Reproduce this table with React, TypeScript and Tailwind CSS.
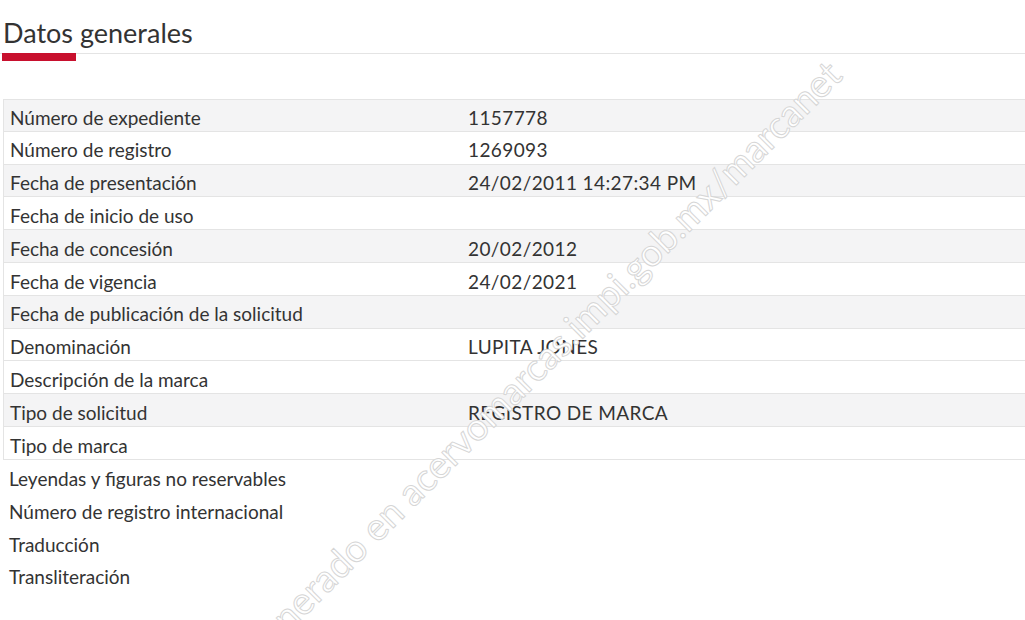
import React from 'react'

type Row = { label: string; value?: string; shade?: boolean; boxed?: boolean }

const rows: Row[] = [
  { label: 'Número de expediente', value: '1157778', shade: true, boxed: true },
  { label: 'Número de registro', value: '1269093', boxed: true },
  { label: 'Fecha de presentación', value: '24/02/2011 14:27:34 PM', shade: true, boxed: true },
  { label: 'Fecha de inicio de uso', boxed: true },
  { label: 'Fecha de concesión', value: '20/02/2012', shade: true, boxed: true },
  { label: 'Fecha de vigencia', value: '24/02/2021', boxed: true },
  { label: 'Fecha de publicación de la solicitud', shade: true, boxed: true },
  { label: 'Denominación', value: 'LUPITA JONES', boxed: true },
  { label: 'Descripción de la marca', boxed: true },
  { label: 'Tipo de solicitud', value: 'REGISTRO DE MARCA', shade: true, boxed: true },
  { label: 'Tipo de marca', boxed: true },
  { label: 'Leyendas y figuras no reservables' },
  { label: 'Número de registro internacional' },
  { label: 'Traducción' },
  { label: 'Transliteración' },
]

const App = () => {
  return (
    <div className="relative w-full h-[620px] overflow-hidden bg-white text-[#333333] font-['Lato','Liberation_Sans',sans-serif]">
      <div className="pt-[16px]">
        <h2 className="pl-[3px] text-[27px] leading-[33px] text-[#333333]">Datos generales</h2>
        <div className="mt-[4px] h-px w-full bg-[#e4e4e4]" />
        <div className="-mt-px ml-[2px] h-[8px] w-[74px] bg-[#c8102e]" />
      </div>

      <div className="mt-[38px] ml-[3px]">
        {rows.map((r, i) => (
          <div
            key={i}
            className={
              'flex items-center h-[32.8px] pt-[6px] text-[19px] ' +
              (r.boxed ? 'border-l border-b border-[#e4e4e4] ' : '') +
              (r.boxed && i === 0 ? 'border-t ' : '') +
              (r.shade ? 'bg-[#f4f4f5]' : 'bg-white')
            }
          >
            <div className="w-[464px] pl-[6px] shrink-0 whitespace-nowrap">{r.label}</div>
            <div className="whitespace-nowrap tracking-[0.4px]">{r.value}</div>
          </div>
        ))}
      </div>

      <div className="pointer-events-none absolute left-[539px] top-[362px] -translate-x-1/2 -translate-y-1/2 -rotate-45 whitespace-nowrap text-[38px] text-white [-webkit-text-stroke:1px_#d6d6d6]">
        Generado en acervomarcas.impi.gob.mx/marcanet
      </div>
    </div>
  )
}

export default App
